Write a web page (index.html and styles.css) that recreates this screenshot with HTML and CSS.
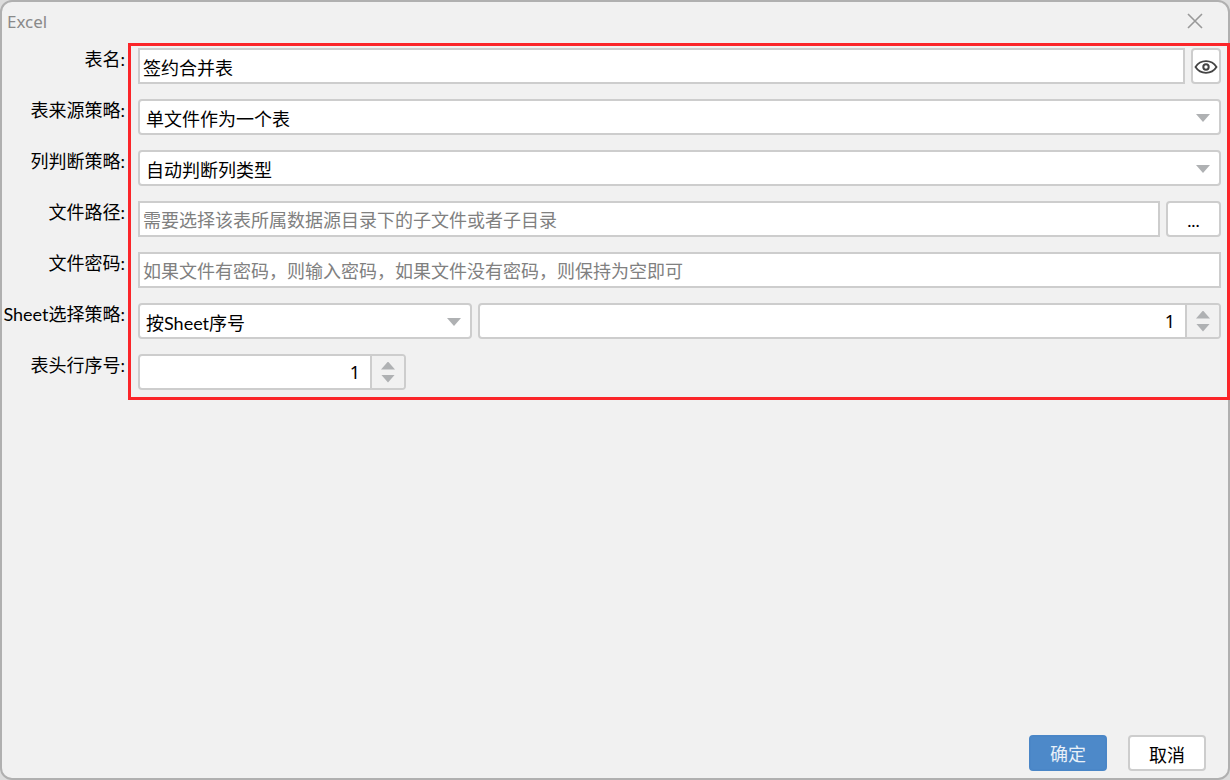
FILE: index.html
```html
<!DOCTYPE html>
<html lang="zh-CN">
<head>
    <meta charset="UTF-8">
    <meta name="viewport" content="width=device-width, initial-scale=1.0">
    <title>Excel</title>
    <link rel="stylesheet" href="styles.css">
</head>
<body>
    <div class="dialog" role="dialog" aria-labelledby="dialogTitle">
        <header class="dialog-header">
            <h1 id="dialogTitle">Excel</h1>
            <button type="button" class="close-button" aria-label="关闭">
                <svg width="16" height="16" viewBox="0 0 16 16">
                    <path d="M1 1L15 15M15 1L1 15" fill="none" stroke="#999" stroke-width="1.6"/>
                </svg>
            </button>
        </header>

        <form class="settings" id="settings">
            <div class="row">
                <label for="tableName">表名:</label>
                <div class="field">
                    <input type="text" class="text-input" id="tableName" value="签约合并表">
                    <button type="button" class="button eye-button" aria-label="预览">
                        <svg width="24" height="16" viewBox="0 0 24 16" fill="none" stroke="#444">
                            <path d="M1.5 8C6.5 0.2 17.5 0.2 22.5 8C17.5 15.8 6.5 15.8 1.5 8Z" stroke-width="1.8"/>
                            <circle cx="12" cy="8" r="2.7" stroke-width="2"/>
                        </svg>
                    </button>
                </div>
            </div>
            <div class="row">
                <label for="sourcePolicy">表来源策略:</label>
                <div class="field">
                    <div class="select">
                        <select id="sourcePolicy">
                            <option>单文件作为一个表</option>
                        </select>
                    </div>
                </div>
            </div>
            <div class="row">
                <label for="columnPolicy">列判断策略:</label>
                <div class="field">
                    <div class="select">
                        <select id="columnPolicy">
                            <option>自动判断列类型</option>
                        </select>
                    </div>
                </div>
            </div>
            <div class="row">
                <label for="filePath">文件路径:</label>
                <div class="field">
                    <input type="text" class="text-input" id="filePath" placeholder="需要选择该表所属数据源目录下的子文件或者子目录">
                    <button type="button" class="button browse-button" aria-label="浏览">...</button>
                </div>
            </div>
            <div class="row">
                <label for="filePassword">文件密码:</label>
                <div class="field">
                    <input type="text" class="text-input" id="filePassword" placeholder="如果文件有密码，则输入密码，如果文件没有密码，则保持为空即可">
                </div>
            </div>
            <div class="row">
                <label for="sheetPolicy">Sheet选择策略:</label>
                <div class="field">
                    <div class="select sheet-select">
                        <select id="sheetPolicy">
                            <option>按Sheet序号</option>
                        </select>
                    </div>
                    <div class="spinner">
                        <input type="number" value="1" min="1" aria-label="Sheet序号">
                        <div class="spinner-buttons">
                            <button type="button" class="up" aria-label="增加"></button>
                            <button type="button" class="down" aria-label="减少"></button>
                        </div>
                    </div>
                </div>
            </div>
            <div class="row">
                <label for="headerRow">表头行序号:</label>
                <div class="field">
                    <div class="spinner header-spinner">
                        <input type="number" id="headerRow" value="1" min="1">
                        <div class="spinner-buttons">
                            <button type="button" class="up" aria-label="增加"></button>
                            <button type="button" class="down" aria-label="减少"></button>
                        </div>
                    </div>
                </div>
            </div>
        </form>

        <footer class="dialog-footer">
            <button type="submit" form="settings" class="button primary">确定</button>
            <button type="button" class="button">取消</button>
        </footer>
    </div>

    <script>
        document.querySelectorAll('.spinner').forEach(function(spinner) {
            const input = spinner.querySelector('input');
            spinner.querySelector('.up').addEventListener('click', () => input.stepUp());
            spinner.querySelector('.down').addEventListener('click', () => input.stepDown());
        });
        document.getElementById('settings').addEventListener('submit', event => event.preventDefault());
    </script>
</body>
</html>
```
FILE: styles.css
```css
* {
    box-sizing: border-box;
}
body {
    margin: 0;
    background-color: #dcdcdc;
    color: #000;
}
body, input, select, button {
    font-family: Lato, "Noto Sans CJK SC", sans-serif;
    font-size: 18px;
}
.dialog {
    display: flex;
    flex-direction: column;
    min-height: 100vh;
    border: 2px solid #b0b0b0;
    border-radius: 12px;
    background-color: #f1f1f1;
}
.dialog-header {
    display: flex;
    justify-content: space-between;
    align-items: center;
    height: 41px;
    padding: 0 25px 3px 5px;
}
.dialog-header h1 {
    margin: 0;
    font-family: "Noto Sans", sans-serif;
    font-size: 17px;
    font-weight: normal;
    color: #8a8a8a;
}
.close-button {
    display: flex;
    padding: 0;
    border: none;
    background: none;
}
.settings {
    position: relative;
    display: flex;
    flex-direction: column;
    gap: 15px;
    padding: 5px 7px 10px 0;
}
/* red highlight around the fields */
.settings::after {
    content: "";
    position: absolute;
    top: 0;
    right: -2px;
    bottom: 0;
    left: 126px;
    border: 3px solid #fb2529;
    pointer-events: none;
}
.row {
    display: flex;
    height: 36px;
}
.row label {
    width: 136px;
    padding-right: 13px;
    line-height: 22px;
    text-align: right;
    white-space: nowrap;
}
.field {
    display: flex;
    flex: 1;
    gap: 6px;
    min-width: 0;
}
.text-input {
    flex: 1;
    min-width: 0;
    padding: 2px 3px 0;
    border: 2px solid #cdcdcd;
    border-radius: 0;
    background-color: #fff;
    outline: none;
}
.text-input::placeholder {
    color: #808080;
}
.button {
    width: 78px;
    height: 36px;
    padding: 2px 0 0;
    border: 2px solid #cdcdcd;
    border-radius: 4px;
    background-color: #fff;
    color: #000;
}
.eye-button {
    display: flex;
    align-items: center;
    justify-content: center;
    width: 30px;
}
.eye-button svg {
    flex: none;
}
.browse-button {
    width: 55px;
}
.select {
    position: relative;
    flex: 1;
}
.select select {
    width: 100%;
    height: 36px;
    padding: 3px 36px 0 6px;
    border: 2px solid #cdcdcd;
    border-radius: 4px;
    background-color: #fff;
    color: #000;
    appearance: none;
}
.select::after {
    content: "";
    position: absolute;
    top: 15px;
    right: 11px;
    border: 7px solid transparent;
    border-top: 8px solid #afb1b3;
    border-bottom: none;
    pointer-events: none;
}
.sheet-select {
    flex: 0 0 334px;
}
.spinner {
    display: flex;
    flex: 1;
    overflow: hidden;
    border: 2px solid #cdcdcd;
    border-radius: 4px;
    background-color: #fff;
}
.header-spinner {
    flex: 0 0 268px;
}
.spinner input {
    flex: 1;
    min-width: 0;
    padding: 0 10px;
    border: none;
    outline: none;
    background: none;
    font-family: "Noto Sans", sans-serif;
    text-align: right;
    appearance: textfield;
}
.spinner input::-webkit-inner-spin-button {
    appearance: none;
    margin: 0;
}
.spinner-buttons {
    display: flex;
    flex-direction: column;
    justify-content: center;
    align-items: center;
    gap: 5px;
    width: 34px;
    border-left: 2px solid #cdcdcd;
    background-color: #f1f1f1;
}
.spinner-buttons button {
    width: 14px;
    height: 8px;
    padding: 0;
    border: none;
    background-color: #afb1b3;
}
.spinner-buttons .up {
    clip-path: polygon(50% 0, 100% 100%, 0 100%);
}
.spinner-buttons .down {
    clip-path: polygon(0 0, 100% 0, 50% 100%);
}
.dialog-footer {
    display: flex;
    justify-content: flex-end;
    gap: 21px;
    margin-top: auto;
    padding: 0 22px 7px;
}
.button.primary {
    padding-top: 0;
    border-color: #4a86c7;
    background-color: #4d89c9;
    color: #e8f0f8;
}
```
